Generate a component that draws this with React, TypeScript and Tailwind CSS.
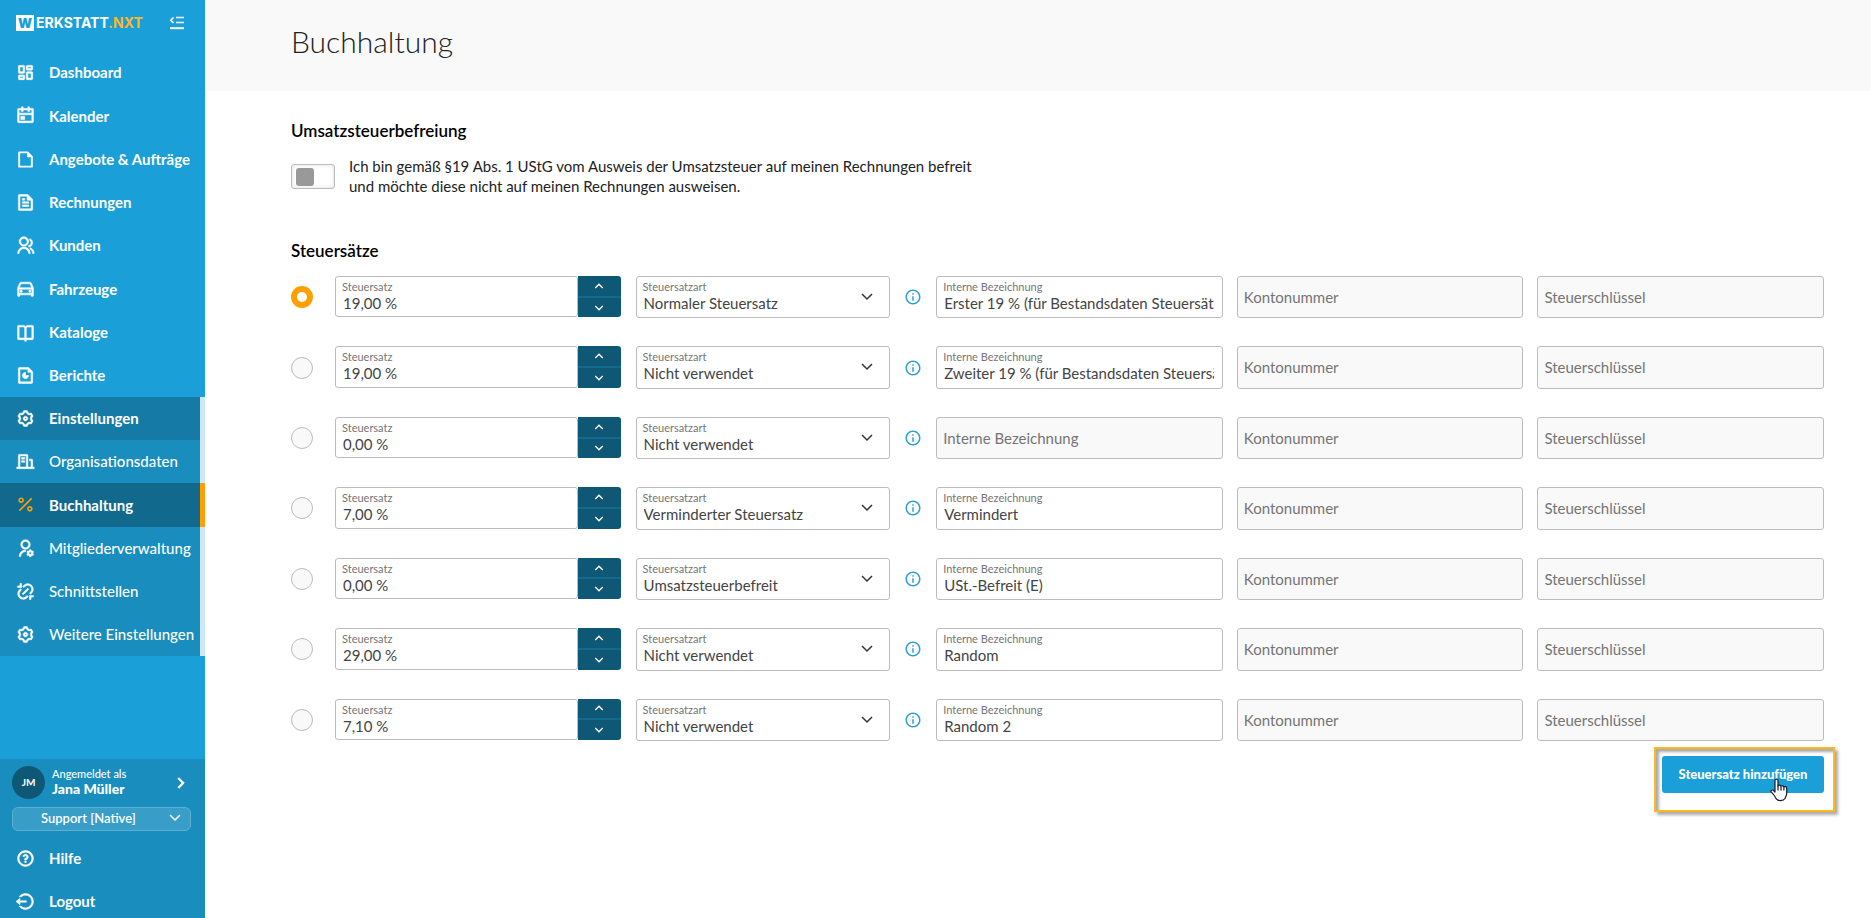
import { useState } from "react";
import type { ComponentType, ReactNode } from "react";
import {
  RiArrowDownSLine,
  RiArrowRightSLine,
  RiArrowUpSLine,
  RiBookOpenLine,
  RiBuildingLine,
  RiCalendarEventLine,
  RiCarLine,
  RiDashboardLine,
  RiFileChart2Line,
  RiFileTextLine,
  RiGroupLine,
  RiInformationLine,
  RiLinkUnlink,
  RiLogoutCircleLine,
  RiPercentLine,
  RiQuestionLine,
  RiSettings3Line,
  RiUserSettingsLine,
} from "react-icons/ri";

interface NavEntry {
  label: string;
  icon: ComponentType<{ className?: string }>;
}

interface TaxRate {
  rate: string;
  kind: string;
  name: string;
}

function SheetIcon({ className }: { className?: string }) {
  return (
    <svg viewBox="0 0 24 24" className={className} fill="none">
      <path d="M4 3h10.500L20 8.500V21H4Z" stroke="currentColor" strokeWidth="2.4" strokeLinejoin="round" />
      <path d="M14 3v6h6Z" fill="currentColor" />
    </svg>
  );
}

const mainNav: NavEntry[] = [
  { label: "Dashboard", icon: RiDashboardLine },
  { label: "Kalender", icon: RiCalendarEventLine },
  { label: "Angebote & Aufträge", icon: SheetIcon },
  { label: "Rechnungen", icon: RiFileTextLine },
  { label: "Kunden", icon: RiGroupLine },
  { label: "Fahrzeuge", icon: RiCarLine },
  { label: "Kataloge", icon: RiBookOpenLine },
  { label: "Berichte", icon: RiFileChart2Line },
];

const settingsNav: NavEntry[] = [
  { label: "Einstellungen", icon: RiSettings3Line },
  { label: "Organisationsdaten", icon: RiBuildingLine },
  { label: "Buchhaltung", icon: RiPercentLine },
  { label: "Mitgliederverwaltung", icon: RiUserSettingsLine },
  { label: "Schnittstellen", icon: RiLinkUnlink },
  { label: "Weitere Einstellungen", icon: RiSettings3Line },
];

const kinds = [
  "Normaler Steuersatz",
  "Verminderter Steuersatz",
  "Umsatzsteuerbefreit",
  "Nicht verwendet",
];

const taxRates: TaxRate[] = [
  { rate: "19,00 %", kind: "Normaler Steuersatz", name: "Erster 19 % (für Bestandsdaten Steuersätze)" },
  { rate: "19,00 %", kind: "Nicht verwendet", name: "Zweiter 19 % (für Bestandsdaten Steuersätze)" },
  { rate: "0,00 %", kind: "Nicht verwendet", name: "" },
  { rate: "7,00 %", kind: "Verminderter Steuersatz", name: "Vermindert" },
  { rate: "0,00 %", kind: "Umsatzsteuerbefreit", name: "USt.-Befreit (E)" },
  { rate: "29,00 %", kind: "Nicht verwendet", name: "Random" },
  { rate: "7,10 %", kind: "Nicht verwendet", name: "Random 2" },
];

function NavLink({ label, icon: Icon, className = "" }: NavEntry & { className?: string }) {
  return (
    <a href="#" className={`flex items-center gap-[14px] pl-4 whitespace-nowrap text-white ${className}`}>
      <Icon className="size-[19px] shrink-0 stroke-[0.7]" />
      <span>{label}</span>
    </a>
  );
}

function Sidebar() {
  return (
    <aside className="flex w-[205px] shrink-0 flex-col bg-[#1b9fd8] text-[15px] font-bold text-white">
      <div className="flex h-[51px] items-start justify-between pt-[15px] pr-5 pl-4">
        <a href="#" className="flex items-center gap-0.5 font-['Inter',sans-serif] text-sm leading-4 font-bold">
          <span className="flex h-4 w-[18px] items-center justify-center bg-white text-[13px] font-black text-[#1b9fd8]">
            W
          </span>
          <span>
            ERKSTATT<span className="text-[#fdb72a]">.NXT</span>
          </span>
        </a>
        <button type="button" aria-label="Menü einklappen">
          <svg viewBox="0 0 16 16" className="size-4" fill="none" stroke="currentColor" strokeWidth="1.6">
            <path d="M7 2.500h8M7 7.500h8M4.500 2.500 1.800 5.200l2.700 2.700" />
            <path d="M1 13.200h14" strokeWidth="2" />
          </svg>
        </button>
      </div>

      <nav className="flex flex-col">
        <div className="grid h-[346px] auto-rows-fr">
          {mainNav.map((item) => (
            <NavLink key={item.label} {...item} />
          ))}
        </div>
        <div className="grid h-[259px] auto-rows-fr bg-[#188dbe]">
          {settingsNav.map((item, idx) => {
            if (item.label === "Buchhaltung") {
              return (
                <NavLink
                  key={item.label}
                  {...item}
                  className="border-r-[5px] border-[#ffa000] bg-[#116a8e] [&>svg]:stroke-0 [&>svg]:text-[#ffa000]"
                />
              );
            }
            return (
              <NavLink
                key={item.label}
                {...item}
                className={idx === 0 ? "border-r-[5px] border-[#cce9f5] bg-[#157ba6]" : "border-r-[5px] border-[#cce9f5] font-medium"}
              />
            );
          })}
        </div>
      </nav>

      <div className="mt-auto flex flex-col bg-[#188dbe] pt-[7px]">
        <button type="button" className="flex items-center pr-[14px] pl-3 text-left">
          <span className="flex size-[33px] items-center justify-center rounded-full bg-[#0e5876] text-[10px]">JM</span>
          <span className="ml-[7px] flex-1 pb-0.5">
            <span className="block text-[11px] leading-[14px] font-medium">Angemeldet als</span>
            <span className="block text-sm leading-4 font-black">Jana Müller</span>
          </span>
          <RiArrowRightSLine className="size-5 stroke-1" />
        </button>
        <div className="relative mt-[7px] mr-[14px] ml-3 h-6">
          <select
            aria-label="Mandant"
            className="h-6 w-full appearance-none rounded-md border border-[#5db0d3] bg-[#389ec8] pl-7 text-[13px] font-semibold text-white"
          >
            <option>Support [Native]</option>
          </select>
          <svg viewBox="0 0 12 8" className="pointer-events-none absolute top-2 right-[10px] h-2 w-3" fill="none" stroke="currentColor" strokeWidth="1.5">
            <path d="m1 1 5 5 5-5" />
          </svg>
        </div>
        <div className="mt-[7px] -mb-[5px] grid auto-rows-[43px]">
          <NavLink label="Hilfe" icon={RiQuestionLine} />
          <NavLink label="Logout" icon={RiLogoutCircleLine} />
        </div>
      </div>
    </aside>
  );
}

function Field({ id, label, className = "", children }: { id: string; label: string; className?: string; children: ReactNode }) {
  return (
    <div className={`flex min-w-0 flex-col rounded-[3px] border border-[#bcbcbc] bg-white pt-[3px] pr-2 pl-[6px] ${className}`}>
      <label htmlFor={id} className="text-[11px] leading-[13px] text-[#757575]">
        {label}
      </label>
      {children}
    </div>
  );
}

function EmptyField({ label }: { label: string }) {
  return (
    <input
      type="text"
      aria-label={label}
      placeholder={label}
      className="w-full min-w-0 rounded-[3px] border border-[#bcbcbc] bg-[#f9f9f9] px-[6px] text-[15px] text-[#444] placeholder:text-[#757575]"
    />
  );
}

function TaxRow({ row, idx, checked, onCheck }: { row: TaxRate; idx: number; checked: boolean; onCheck: () => void }) {
  return (
    <div className="flex gap-[22px]">
      <input
        type="radio"
        name="default-rate"
        aria-label={`Standard: ${row.rate}`}
        checked={checked}
        onChange={onCheck}
        className="size-[22px] shrink-0 appearance-none self-center rounded-full border border-[#bcbcbc] bg-[#f9f9f9] checked:border-6 checked:border-[#ffa000] checked:bg-white"
      />
      <div className="grid min-w-0 flex-1 grid-cols-5 gap-[14px]">
        <div className="flex min-w-0 pr-px pb-px">
          <Field id={`rate-${idx}`} label="Steuersatz" className="flex-1">
            <input id={`rate-${idx}`} defaultValue={row.rate} className="w-full pl-px text-[15px] leading-5 text-[#444]" />
          </Field>
          <div className="flex w-[43px] flex-col overflow-hidden rounded-r-[3px] bg-[#0e5876] text-white">
            <button type="button" aria-label="Erhöhen" className="flex flex-1 items-center justify-center border-b-2 border-[#126b8f]">
              <RiArrowUpSLine className="size-4" />
            </button>
            <button type="button" aria-label="Verringern" className="flex flex-1 items-center justify-center">
              <RiArrowDownSLine className="size-4" />
            </button>
          </div>
        </div>

        <div className="flex min-w-0 items-stretch">
          <Field id={`kind-${idx}`} label="Steuersatzart" className="relative flex-1">
            <select
              id={`kind-${idx}`}
              defaultValue={row.kind}
              className="w-full appearance-none pl-px text-[15px] leading-5 text-[#444]"
            >
              {kinds.map((kind) => (
                <option key={kind}>{kind}</option>
              ))}
            </select>
            <svg viewBox="0 0 12 8" className="pointer-events-none absolute top-4 right-4 h-2 w-3" fill="none" stroke="#333" strokeWidth="1.5">
              <path d="m1 1 5 5 5-5" />
            </svg>
          </Field>
          <button type="button" aria-label="Information" className="ml-[14px] text-[#2f9fd8]">
            <RiInformationLine className="size-[18px]" />
          </button>
        </div>

        {row.name ? (
          <Field id={`name-${idx}`} label="Interne Bezeichnung">
            <input id={`name-${idx}`} defaultValue={row.name} className="w-full pl-px text-[15px] leading-5 text-[#444]" />
          </Field>
        ) : (
          <EmptyField label="Interne Bezeichnung" />
        )}
        <EmptyField label="Kontonummer" />
        <EmptyField label="Steuerschlüssel" />
      </div>
    </div>
  );
}

export default function App() {
  const [selected, setSelected] = useState(0);
  const [exempt, setExempt] = useState(false);

  return (
    <div className="flex h-screen overflow-hidden bg-white font-['Lato','Open_Sans',sans-serif]">
      <Sidebar />

      <main className="min-w-0 flex-1">
        <header className="h-[91px] bg-[#f9f9f9] pt-[23px] pl-[86px]">
          <h1 className="text-[30px] leading-9 font-light text-[#222]">Buchhaltung</h1>
        </header>

        <div className="pr-[47px] pl-[86px]">
          <h2 className="pt-[30px] text-[17px] leading-5 font-semibold text-black">Umsatzsteuerbefreiung</h2>
          <div className="mt-[15px] flex gap-[14px]">
            <input
              id="exempt"
              type="checkbox"
              role="switch"
              checked={exempt}
              onChange={() => setExempt(!exempt)}
              className="mt-2 h-[25px] w-11 shrink-0 appearance-none rounded-[3px] border border-[#bcbcbc] bg-white px-1 py-[3px] shadow-[inset_0_0_4px_#ddd] before:block before:size-[18px] before:rounded-[3px] before:bg-[#999] checked:before:ml-4 checked:before:bg-[#1b9fd8]"
            />
            <label htmlFor="exempt" className="text-[15px] leading-5 text-[#222]">
              Ich bin gemäß §19 Abs. 1 UStG vom Ausweis der Umsatzsteuer auf meinen Rechnungen befreit
              <br />
              und möchte diese nicht auf meinen Rechnungen ausweisen.
            </label>
          </div>

          <h2 className="pt-[45px] text-[17px] leading-5 font-semibold text-black">Steuersätze</h2>
          <div className="mt-[15px] grid h-[465px] auto-rows-fr gap-7">
            {taxRates.map((row, idx) => (
              <TaxRow key={idx} row={row} idx={idx} checked={selected === idx} onCheck={() => setSelected(idx)} />
            ))}
          </div>

          <div className="mt-[15px] flex justify-end">
            <div className="relative">
              <button type="button" className="h-[37px] w-[162px] rounded-[3px] bg-[#1b9fd8] text-[13px] font-black text-white">
                Steuersatz hinzufügen
              </button>
              {/* highlight frame and pointer */}
              <div className="pointer-events-none absolute -top-[9px] -right-[11px] -left-2 h-[65px] border-2 border-[#fdb81e] shadow-[3px_3px_3px_#0005,inset_3px_3px_3px_#0005]" />
              <svg viewBox="0 0 18 24" className="pointer-events-none absolute top-[22px] left-[108px] h-6 w-[18px]" fill="#fff" stroke="#1a1a2e" strokeWidth="1.2" strokeLinejoin="round">
                <path d="M5 14V2.600C5 .5 8 .5 8 2.600V8c.2-1.200 2.800-1.100 3 .4.4-1 2.700-.8 2.900.6.5-.8 2.800-.5 2.800 1.200v5.300c0 2.200-1.300 3.400-1.700 5-1.600 2.600-7 2.800-8.700.4-1-2-2.500-4.300-4.900-6.700-1.200-1.600.6-2.700 1.900-1.900L5 14Z" />
                <path d="M8 7.500v5M11 8.500v4M13.900 9v3.500" />
              </svg>
            </div>
          </div>
        </div>
      </main>
    </div>
  );
}
